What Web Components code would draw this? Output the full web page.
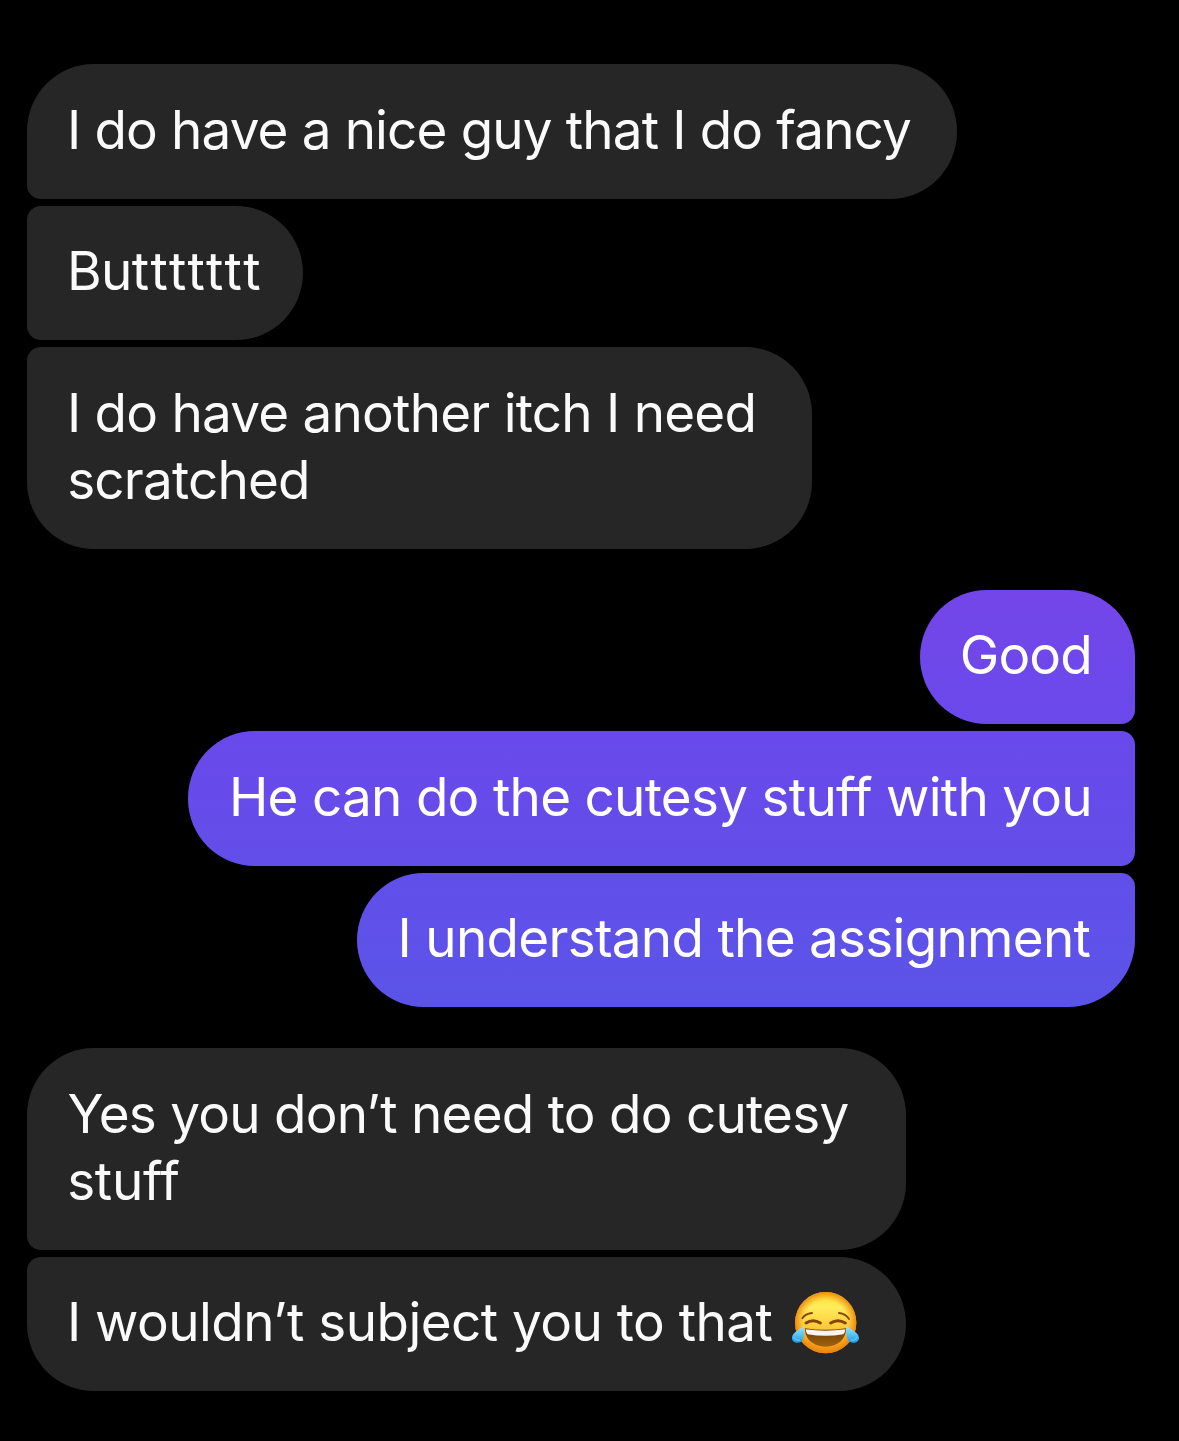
<!DOCTYPE html>
<html lang="en">
<head>
<meta charset="utf-8">
<title>Chat</title>
<style>
html,body{margin:0;background:#000}
</style>
</head>
<body>
<chat-thread>
  <chat-group>
    <chat-bubble pos="first" style="width:929.5px"><chat-line start="44" span="840">I do have a nice guy that I do fancy</chat-line></chat-bubble>
    <chat-bubble pos="middle" style="width:275.7px"><chat-line start="44" span="195.4"><span style="letter-spacing:-.6px">Bu</span>ttttttt</chat-line></chat-bubble>
    <chat-bubble pos="last" style="width:784.5px"><chat-line start="44" span="682.5">I do have another itch I need</chat-line><chat-line start="42.2" span="237.8">scratched</chat-line></chat-bubble>
  </chat-group>
  <chat-group side="out">
    <chat-bubble side="out" pos="first" style="width:215.3px;--from:#7446e9;--to:#6a49eb"><chat-line start="43" span="126.6">Good</chat-line></chat-bubble>
    <chat-bubble side="out" pos="middle" style="width:946.7px;--from:#6a49eb;--to:#624ee9"><chat-line start="44.6" span="856.4">He can do the cutesy stuff with you</chat-line></chat-bubble>
    <chat-bubble side="out" pos="last" style="width:778px;--from:#624fea;--to:#5b54e8"><chat-line start="44.6" span="689">I understand the assignment</chat-line></chat-bubble>
  </chat-group>
  <chat-group>
    <chat-bubble pos="first" style="width:878.8px"><chat-line start="41.5" span="780">Yes you don’t need to do cutesy</chat-line><chat-line start="42.2" span="110">stuff</chat-line></chat-bubble>
    <chat-bubble pos="last" style="width:878.8px"><chat-line start="44" span="701.5">I wouldn’t subject you to that<joy-emoji slot="after"></joy-emoji></chat-line></chat-bubble>
  </chat-group>
</chat-thread>
<script>
const SIZE = 53;
const pen = document.createElement('canvas').getContext('2d');

class ChatThread extends HTMLElement {
  constructor() {
    super();
    this.attachShadow({mode: 'open'}).innerHTML = `<style>
      :host{display:flex;flex-direction:column;gap:40.8px;box-sizing:border-box;width:1179px;height:1441px;
        padding:64.4px 44px 0 27px;background:#000;color:#fafafa;overflow:hidden;
        font:400 ${SIZE}px/67.2px Inter,"Liberation Sans",sans-serif}
    </style><slot></slot>`;
  }
}

class ChatGroup extends HTMLElement {
  constructor() {
    super();
    this.attachShadow({mode: 'open'}).innerHTML = `<style>
      :host{display:flex;flex-direction:column;align-items:flex-start;gap:7px}
      :host([side=out]){align-items:flex-end;color:#fff}
    </style><slot></slot>`;
  }
}

class ChatBubble extends HTMLElement {
  constructor() {
    super();
    this.attachShadow({mode: 'open'}).innerHTML = `<style>
      :host{display:flex;flex-direction:column;box-sizing:border-box;padding:32.6px 0 34.7px;
        background:#262626;border-radius:67px}
      :host([side=out]){background:linear-gradient(var(--from),var(--to))}
      :host([pos=first]){border-bottom-left-radius:14px}
      :host([pos=middle]){border-top-left-radius:14px;border-bottom-left-radius:14px}
      :host([pos=last]){border-top-left-radius:14px}
      :host([side=out][pos=first]){border-radius:67px 67px 14px 67px}
      :host([side=out][pos=middle]){border-radius:67px 14px 14px 67px}
      :host([side=out][pos=last]){border-radius:67px 14px 67px 67px}
    </style><slot></slot>`;
  }
}

/* One line of a message: tracking is adjusted so its ink covers "span" pixels from "start". */
class ChatLine extends HTMLElement {
  constructor() {
    super();
    this.attachShadow({mode: 'open'}).innerHTML = `<style>
      :host{display:flex;align-items:center;height:67.2px;white-space:pre;font-feature-settings:"calt" 0}
    </style><span><slot></slot></span><slot name="after"></slot>`;
  }
  connectedCallback() {
    const text = this.textContent.trim();
    pen.font = `400 ${SIZE}px Inter`;
    const m = pen.measureText(text);
    const ink = m.actualBoundingBoxRight + m.actualBoundingBoxLeft;
    const span = this.shadowRoot.querySelector('span');
    span.style.letterSpacing = (this.getAttribute('span') - ink) / (text.length - 1) + 'px';
    span.style.marginLeft = +this.getAttribute('start') + m.actualBoundingBoxLeft + 'px';
  }
}

class JoyEmoji extends HTMLElement {
  constructor() {
    super();
    this.attachShadow({mode: 'open'}).innerHTML = `<style>
      :host{display:block;width:70px;height:66.67px;margin:-2px 0 0 17.4px;white-space:normal}
      svg{display:block}
    </style>
    <svg width="70" height="66.67" viewBox="60 55 210 200" role="img" aria-label="😂">
      <defs>
        <linearGradient id="f" x1="0" y1="0" x2="0" y2="1"><stop offset="0" stop-color="#ffdc30"/><stop offset=".25" stop-color="#ffec5c"/><stop offset=".55" stop-color="#ffcd3c"/><stop offset="1" stop-color="#f59518"/></linearGradient>
        <radialGradient id="e"><stop offset=".72" stop-color="#f08a0c" stop-opacity="0"/><stop offset="1" stop-color="#e87f06" stop-opacity=".85"/></radialGradient>
        <linearGradient id="m" x1="0" y1="0" x2="0" y2="1"><stop offset="0" stop-color="#6f3c05"/><stop offset="1" stop-color="#a0620b"/></linearGradient>
        <linearGradient id="t" x1="0" y1="0" x2="0" y2="1"><stop offset="0" stop-color="#a5e6ff"/><stop offset=".55" stop-color="#55c3f8"/><stop offset="1" stop-color="#1e98e4"/></linearGradient>
      </defs>
      <circle cx="167" cy="156" r="92" fill="url(#f)"/><circle cx="167" cy="156" r="92" fill="url(#e)"/>
      <g fill="none" stroke="#834405" stroke-linecap="round">
        <path d="M97 143Q106 129 126 127" stroke-width="5.5"/><path d="M207 127Q227 129 237 145" stroke-width="5.5"/>
        <path d="M108 157Q129 143 151 157" stroke-width="9"/><path d="M182 157Q204 143 226 157" stroke-width="9"/>
      </g>
      <path d="M105 173Q166 182 228 173C229 205 204 228 167 228C130 228 104 205 105 173Z" fill="url(#m)"/>
      <path d="M107 176Q166 184 226 176Q226 187 220 191Q167 200 113 191Q107 187 107 176Z" fill="#f7f5f2"/>
      <path d="M102 165C98 172 66 184 66 201C66 211 73 216 83 216C100 216 104 198 102 165Z" fill="url(#t)"/>
      <path d="M229 165C233 172 267 184 267 201C267 211 260 216 250 216C232 216 227 198 229 165Z" fill="url(#t)"/>
      <path d="M73 201Q76 212 89 208M260 201Q257 212 243 208" fill="none" stroke="#8be0ff" stroke-width="3" stroke-linecap="round" opacity=".7"/>
    </svg>`;
  }
}

customElements.define('joy-emoji', JoyEmoji);
customElements.define('chat-line', ChatLine);
customElements.define('chat-bubble', ChatBubble);
customElements.define('chat-group', ChatGroup);
customElements.define('chat-thread', ChatThread);
</script>
</body>
</html>
